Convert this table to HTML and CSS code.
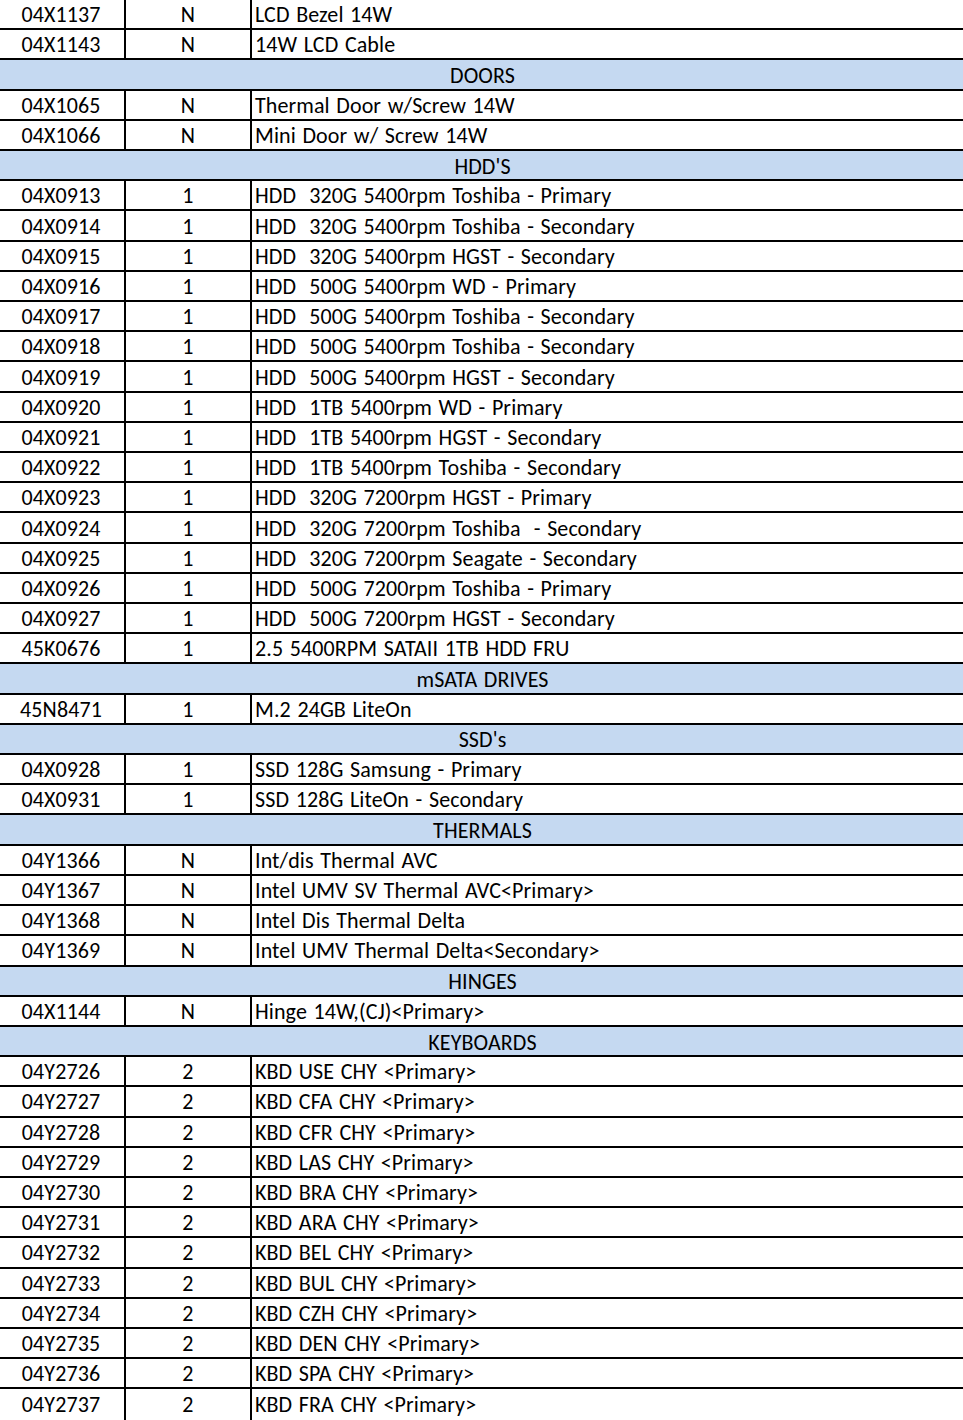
FILE: index.html
```html
<!DOCTYPE html>
<html>
<head>
<meta charset="utf-8">
<link rel="stylesheet" href="styles.css">
</head>
<body>
<div class="sheet">
<div class="row"><div class="c pn">04X1137</div><div class="c qty">N</div><div class="c desc">LCD Bezel 14W</div></div>
<div class="row"><div class="c pn">04X1143</div><div class="c qty">N</div><div class="c desc">14W LCD Cable</div></div>
<div class="row sec">DOORS</div>
<div class="row"><div class="c pn">04X1065</div><div class="c qty">N</div><div class="c desc">Thermal Door w/Screw 14W</div></div>
<div class="row"><div class="c pn">04X1066</div><div class="c qty">N</div><div class="c desc">Mini Door w/ Screw 14W</div></div>
<div class="row sec">HDD'S</div>
<div class="row"><div class="c pn">04X0913</div><div class="c qty">1</div><div class="c desc">HDD  320G 5400rpm Toshiba - Primary</div></div>
<div class="row"><div class="c pn">04X0914</div><div class="c qty">1</div><div class="c desc">HDD  320G 5400rpm Toshiba - Secondary</div></div>
<div class="row"><div class="c pn">04X0915</div><div class="c qty">1</div><div class="c desc">HDD  320G 5400rpm HGST - Secondary</div></div>
<div class="row"><div class="c pn">04X0916</div><div class="c qty">1</div><div class="c desc">HDD  500G 5400rpm WD - Primary</div></div>
<div class="row"><div class="c pn">04X0917</div><div class="c qty">1</div><div class="c desc">HDD  500G 5400rpm Toshiba - Secondary</div></div>
<div class="row"><div class="c pn">04X0918</div><div class="c qty">1</div><div class="c desc">HDD  500G 5400rpm Toshiba - Secondary</div></div>
<div class="row"><div class="c pn">04X0919</div><div class="c qty">1</div><div class="c desc">HDD  500G 5400rpm HGST - Secondary</div></div>
<div class="row"><div class="c pn">04X0920</div><div class="c qty">1</div><div class="c desc">HDD  1TB 5400rpm WD - Primary</div></div>
<div class="row"><div class="c pn">04X0921</div><div class="c qty">1</div><div class="c desc">HDD  1TB 5400rpm HGST - Secondary</div></div>
<div class="row"><div class="c pn">04X0922</div><div class="c qty">1</div><div class="c desc">HDD  1TB 5400rpm Toshiba - Secondary</div></div>
<div class="row"><div class="c pn">04X0923</div><div class="c qty">1</div><div class="c desc">HDD  320G 7200rpm HGST - Primary</div></div>
<div class="row"><div class="c pn">04X0924</div><div class="c qty">1</div><div class="c desc">HDD  320G 7200rpm Toshiba  - Secondary</div></div>
<div class="row"><div class="c pn">04X0925</div><div class="c qty">1</div><div class="c desc">HDD  320G 7200rpm Seagate - Secondary</div></div>
<div class="row"><div class="c pn">04X0926</div><div class="c qty">1</div><div class="c desc">HDD  500G 7200rpm Toshiba - Primary</div></div>
<div class="row"><div class="c pn">04X0927</div><div class="c qty">1</div><div class="c desc">HDD  500G 7200rpm HGST - Secondary</div></div>
<div class="row"><div class="c pn">45K0676</div><div class="c qty">1</div><div class="c desc">2.5 5400RPM SATAII 1TB HDD FRU</div></div>
<div class="row sec">mSATA DRIVES</div>
<div class="row"><div class="c pn">45N8471</div><div class="c qty">1</div><div class="c desc">M.2 24GB LiteOn</div></div>
<div class="row sec">SSD's</div>
<div class="row"><div class="c pn">04X0928</div><div class="c qty">1</div><div class="c desc">SSD 128G Samsung - Primary</div></div>
<div class="row"><div class="c pn">04X0931</div><div class="c qty">1</div><div class="c desc">SSD 128G LiteOn - Secondary</div></div>
<div class="row sec">THERMALS</div>
<div class="row"><div class="c pn">04Y1366</div><div class="c qty">N</div><div class="c desc">Int/dis Thermal AVC</div></div>
<div class="row"><div class="c pn">04Y1367</div><div class="c qty">N</div><div class="c desc">Intel UMV SV Thermal AVC&lt;Primary&gt;</div></div>
<div class="row"><div class="c pn">04Y1368</div><div class="c qty">N</div><div class="c desc">Intel Dis Thermal Delta</div></div>
<div class="row"><div class="c pn">04Y1369</div><div class="c qty">N</div><div class="c desc">Intel UMV Thermal Delta&lt;Secondary&gt;</div></div>
<div class="row sec">HINGES</div>
<div class="row"><div class="c pn">04X1144</div><div class="c qty">N</div><div class="c desc">Hinge 14W,(CJ)&lt;Primary&gt;</div></div>
<div class="row sec">KEYBOARDS</div>
<div class="row"><div class="c pn">04Y2726</div><div class="c qty">2</div><div class="c desc">KBD USE CHY &lt;Primary&gt;</div></div>
<div class="row"><div class="c pn">04Y2727</div><div class="c qty">2</div><div class="c desc">KBD CFA CHY &lt;Primary&gt;</div></div>
<div class="row"><div class="c pn">04Y2728</div><div class="c qty">2</div><div class="c desc">KBD CFR CHY &lt;Primary&gt;</div></div>
<div class="row"><div class="c pn">04Y2729</div><div class="c qty">2</div><div class="c desc">KBD LAS CHY &lt;Primary&gt;</div></div>
<div class="row"><div class="c pn">04Y2730</div><div class="c qty">2</div><div class="c desc">KBD BRA CHY &lt;Primary&gt;</div></div>
<div class="row"><div class="c pn">04Y2731</div><div class="c qty">2</div><div class="c desc">KBD ARA CHY &lt;Primary&gt;</div></div>
<div class="row"><div class="c pn">04Y2732</div><div class="c qty">2</div><div class="c desc">KBD BEL CHY &lt;Primary&gt;</div></div>
<div class="row"><div class="c pn">04Y2733</div><div class="c qty">2</div><div class="c desc">KBD BUL CHY &lt;Primary&gt;</div></div>
<div class="row"><div class="c pn">04Y2734</div><div class="c qty">2</div><div class="c desc">KBD CZH CHY &lt;Primary&gt;</div></div>
<div class="row"><div class="c pn">04Y2735</div><div class="c qty">2</div><div class="c desc">KBD DEN CHY &lt;Primary&gt;</div></div>
<div class="row"><div class="c pn">04Y2736</div><div class="c qty">2</div><div class="c desc">KBD SPA CHY &lt;Primary&gt;</div></div>
<div class="row last"><div class="c pn">04Y2737</div><div class="c qty">2</div><div class="c desc">KBD FRA CHY &lt;Primary&gt;</div></div>
</div>
</body>
</html>
```
FILE: styles.css
```css
html, body {
  margin: 0;
  padding: 0;
  background: #ffffff;
}
.sheet {
  width: 963px;
  font-family: Carlito, Lato, "Open Sans", sans-serif;
  font-size: 22px;
  word-spacing: 1.5px;
  letter-spacing: 0.1px;
  color: #000;
}
.row {
  display: grid;
  grid-template-columns: 126px 126px 1fr;
  height: 30.21px;
  box-sizing: border-box;
  border-bottom: 2px solid #000;
}
.row.last {
  border-bottom: none;
}
.c {
  display: flex;
  align-items: center;
  white-space: pre;
  overflow: hidden;
  line-height: 1;
  padding-top: 2px;
}
.pn, .qty {
  justify-content: center;
  border-right: 2px solid #000;
}
.pn {
  padding-right: 2px;
}
.desc {
  padding-left: 3px;
}
.sec {
  display: flex;
  align-items: center;
  justify-content: center;
  background: #c5d9f1;
  padding-left: 2px;
  padding-top: 2px;
}
```
